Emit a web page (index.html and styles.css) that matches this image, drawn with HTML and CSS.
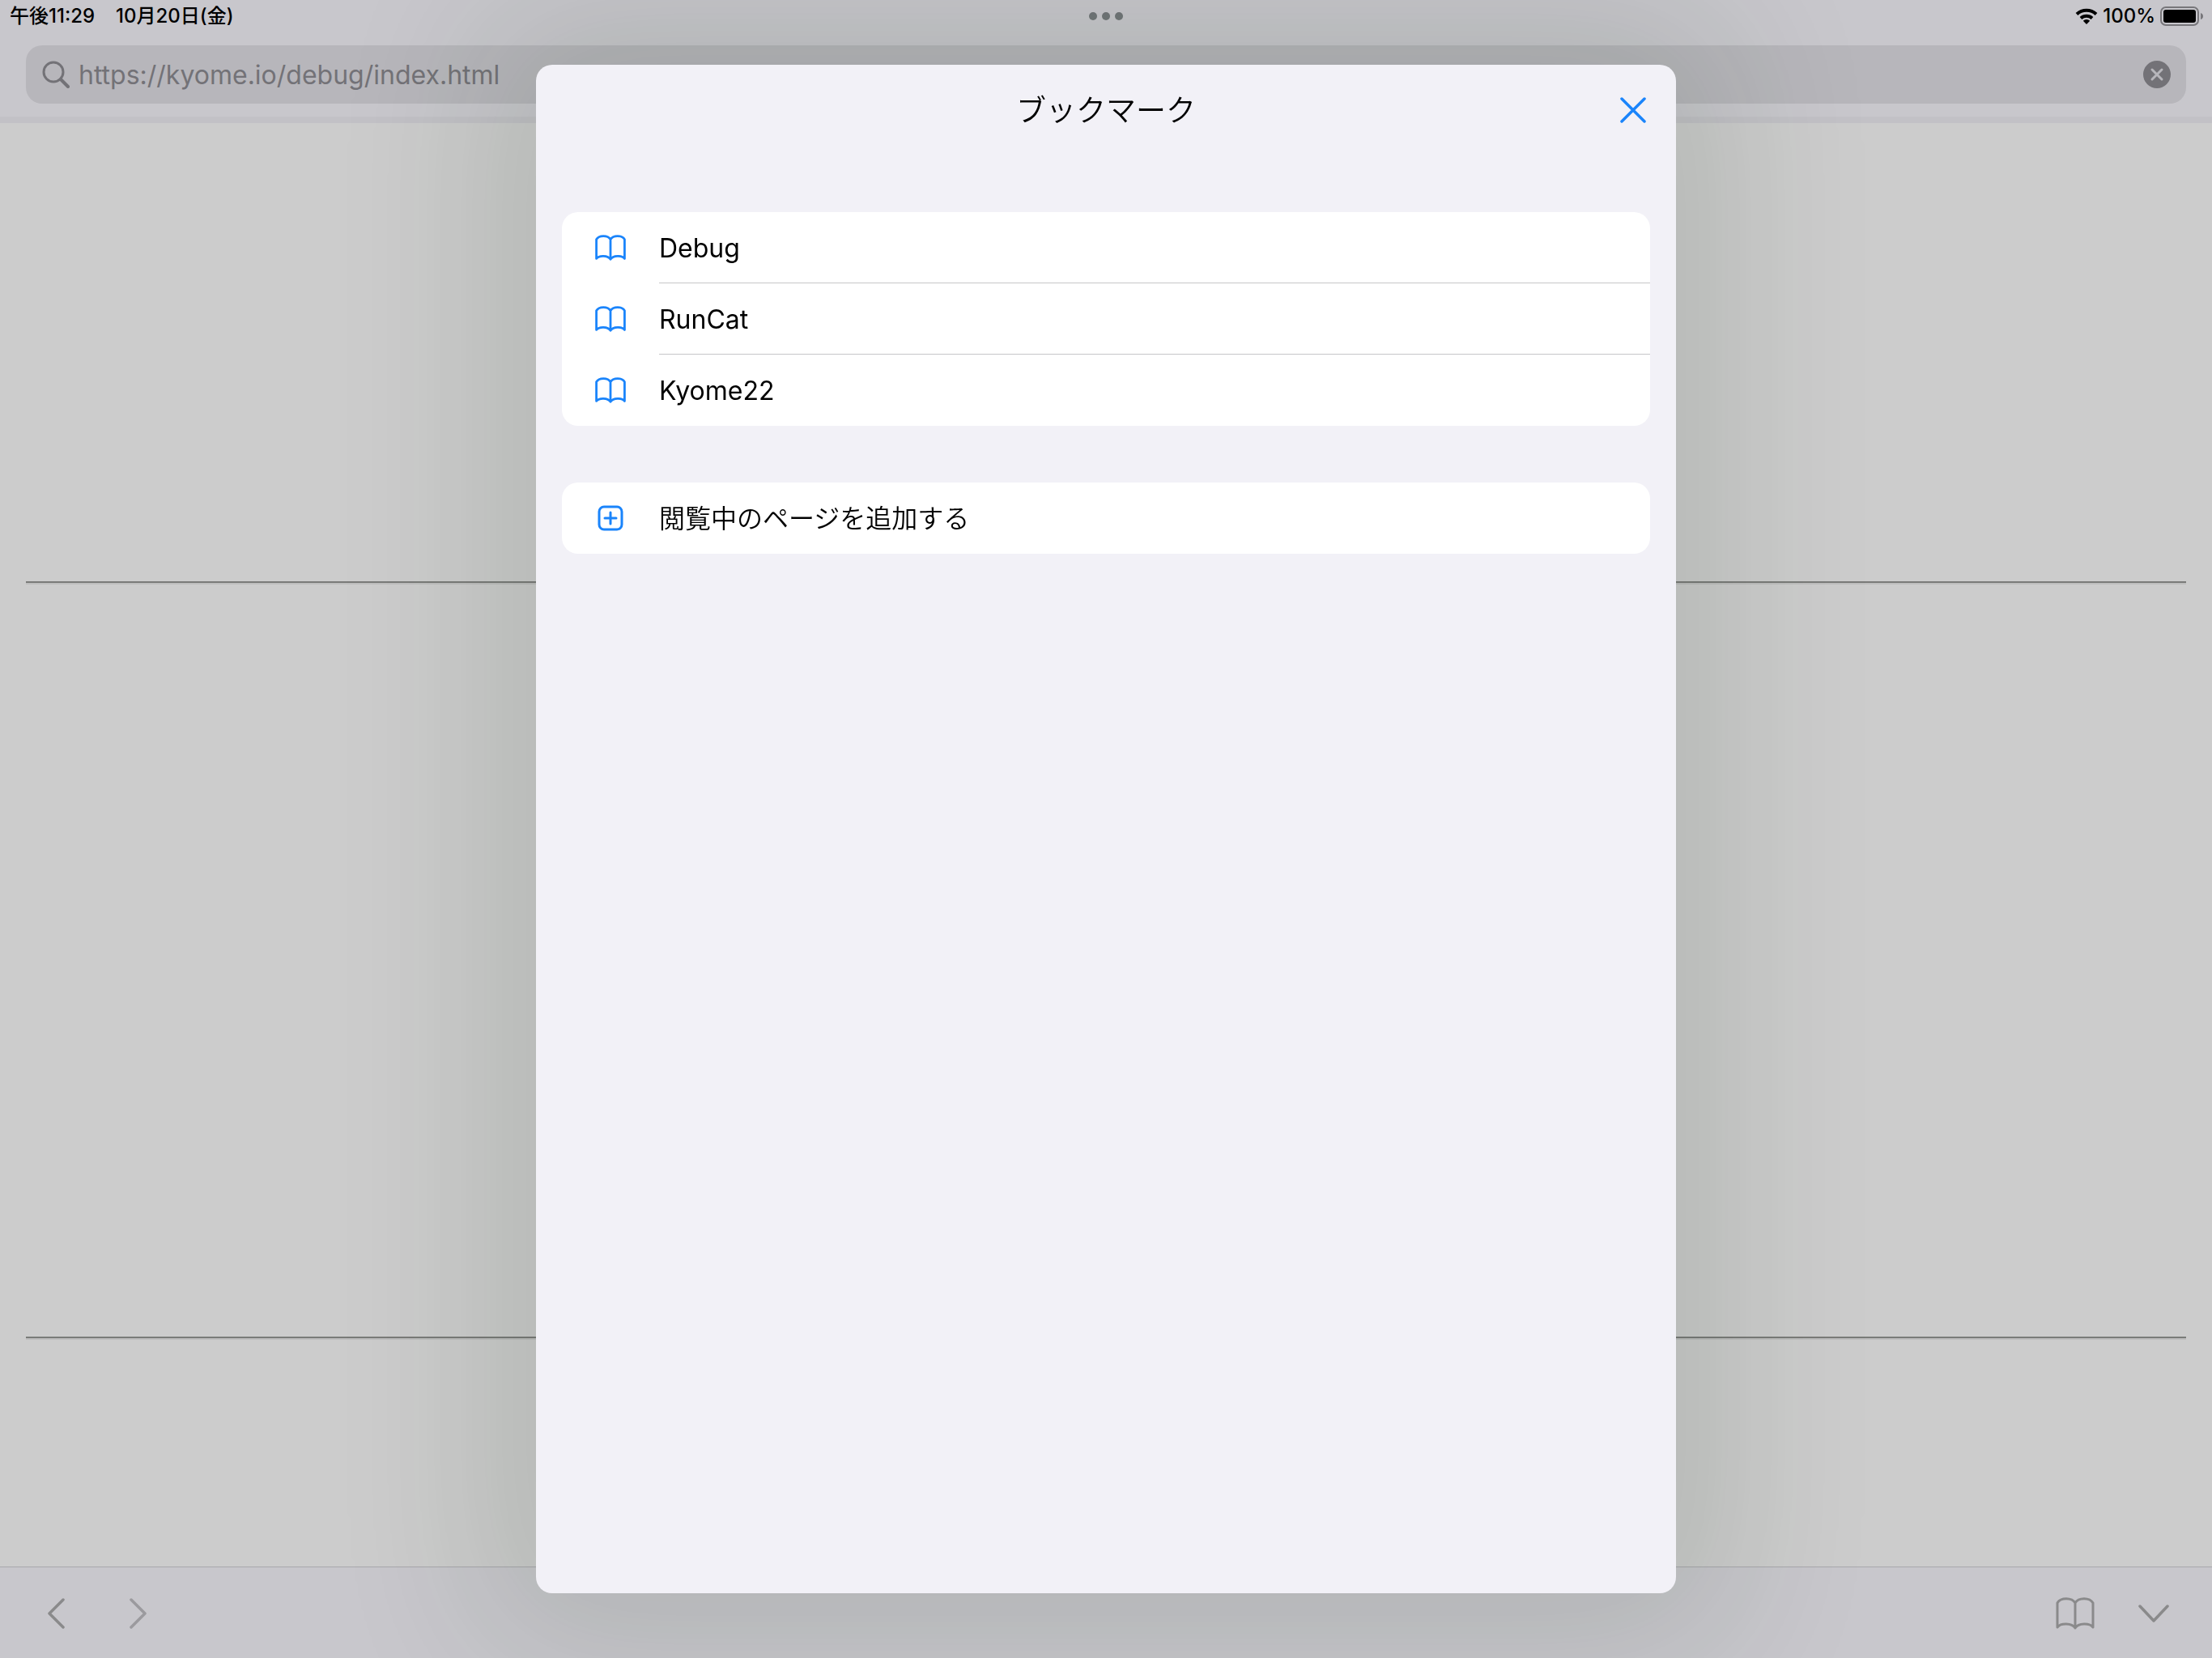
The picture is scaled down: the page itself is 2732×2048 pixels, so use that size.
FILE: index.html
```html
<!DOCTYPE html>
<html lang="ja">
<head>
<meta charset="utf-8">
<meta name="viewport" content="width=device-width, initial-scale=1">
<title>ブックマーク</title>
<link rel="stylesheet" href="styles.css">
</head>
<body>
<svg class="defs" aria-hidden="true">
  <symbol id="book" viewBox="0 0 48 40" fill="none" stroke="currentColor" stroke-linecap="round" stroke-linejoin="round">
    <path d="M24 7C20 0 6 0 2 7V37C6 31.500 20 31.500 24 38C28 31.500 42 31.500 46 37V7C42 0 28 0 24 7V38"/>
  </symbol>
</svg>
<div class="browser">
  <header class="top">
    <div class="status">
      <div class="status-side"><span>午後11:29</span><span>10月20日(金)</span></div>
      <svg class="dots" viewBox="0 0 42 10" aria-hidden="true"><circle cx="5" cy="5" r="5"/><circle cx="21" cy="5" r="5"/><circle cx="37" cy="5" r="5"/></svg>
      <div class="status-side status-right">
        <svg class="wifi" viewBox="0 0 28 20" aria-hidden="true"><path d="M2 7.500A17.500 17.500 0 0 1 26 7.500" fill="none" stroke="#000" stroke-width="4"/><path d="M7 12.500A10.500 10.500 0 0 1 21 12.500" fill="none" stroke="#000" stroke-width="4"/><path d="M14 20L9.800 15.800A6 6 0 0 1 18.200 15.800Z"/></svg>
        <span>100%</span>
        <svg class="battery" viewBox="0 0 54 24" aria-hidden="true"><rect x="1" y="1" width="46" height="22" rx="6" fill="none" stroke="#78777b" stroke-width="2"/><rect x="4" y="4" width="40" height="16" rx="3"/><path d="M50 8Q53 9 53 12T50 16Z" fill="#78777b"/></svg>
      </div>
    </div>
    <form class="address">
      <svg class="search" viewBox="0 0 34 34" aria-hidden="true" fill="none" stroke="currentColor" stroke-width="3" stroke-linecap="round"><circle cx="14" cy="14" r="12"/><path d="M23 23L32 32" stroke-width="4"/></svg>
      <input class="url" type="text" aria-label="URL" value="https://kyome.io/debug/index.html">
      <button class="clear" type="reset" aria-label="消去"><svg viewBox="0 0 34 34"><circle cx="17" cy="17" r="17" fill="#737277"/><path d="M11 11L23 23M23 11L11 23" stroke="#b7b6bb" stroke-width="3" stroke-linecap="round"/></svg></button>
    </form>
  </header>
  <main class="page"><hr><hr></main>
  <nav class="toolbar">
    <button type="button" aria-label="戻る"><svg class="chevron" viewBox="0 0 22 38"><path stroke-width="3.5" d="M20 2L3 19L20 36"/></svg></button>
    <button type="button" aria-label="進む" disabled><svg class="chevron" viewBox="0 0 22 38"><path stroke-width="3.5" d="M2 2L19 19L2 36"/></svg></button>
    <span class="spacer"></span>
    <button type="button" aria-label="ブックマーク"><svg class="book-large"><use href="#book"/></svg></button>
    <button type="button" aria-label="隠す"><svg class="chevron-down" viewBox="0 0 38 22"><path stroke-width="3.5" d="M2 2L19 20L36 2"/></svg></button>
  </nav>
</div>
<div class="overlay">
  <section class="sheet" role="dialog" aria-labelledby="title">
    <header class="sheet-head">
      <h1 id="title">ブックマーク</h1>
      <button class="close" type="button" aria-label="閉じる"><svg viewBox="0 0 32 32"><path stroke-width="3.5" d="M2 2L30 30M30 2L2 30"/></svg></button>
    </header>
    <ul class="card">
      <li><a href="#debug"><svg class="book" stroke-width="3.5"><use href="#book"/></svg><span class="label">Debug</span></a></li>
      <li><a href="#runcat"><svg class="book" stroke-width="3.5"><use href="#book"/></svg><span class="label">RunCat</span></a></li>
      <li><a href="#kyome22"><svg class="book" stroke-width="3.5"><use href="#book"/></svg><span class="label">Kyome22</span></a></li>
    </ul>
    <div class="card">
      <button class="add" type="button"><svg class="plus" viewBox="0 0 32 32" stroke-width="3"><rect x="2" y="2" width="28" height="28" rx="6"/><path d="M16 9V23M9 16H23"/></svg><span class="label label-ja">閲覧中のページを追加する</span></button>
    </div>
  </section>
</div>
</body>
</html>
```
FILE: styles.css
```css
* { box-sizing: border-box; }
body {
  margin: 0;
  font-family: Inter, "Noto Sans CJK JP", sans-serif;
  color: #000;
  background: #ccc;
}
button {
  display: flex;
  padding: 0;
  border: 0;
  background: none;
  color: inherit;
  font: inherit;
}
svg { display: block; flex: none; }
.defs { position: absolute; width: 0; height: 0; }

.browser { display: flex; flex-direction: column; min-height: 100vh; }
.top {
  padding: 0 32px 16px;
  background: #c8c7cc;
  border-bottom: 8px solid #c2c1c6;
}
.status {
  display: grid;
  grid-template-columns: 1fr auto 1fr;
  align-items: center;
  height: 40px;
  margin: 0 -20px 16px;
  font-size: 24px;
  font-weight: 500;
  line-height: 40px;
}
.status-side { display: flex; align-items: center; gap: 26px; }
.status-right { justify-content: flex-end; gap: 6px; margin-right: -2px; }
.dots { width: 42px; height: 10px; fill: #727679; }
.wifi { width: 28px; height: 20px; }
.battery { width: 54px; height: 24px; }
.address {
  display: flex;
  align-items: center;
  height: 72px;
  padding: 0 19px 0 20px;
  border-radius: 20px;
  background: #b7b6bb;
  color: #737277;
}
.search { width: 34px; height: 34px; }
.url {
  flex: 1;
  min-width: 0;
  height: 72px;
  padding: 0 11px;
  border: 0;
  outline: 0;
  background: none;
  color: inherit;
  font: 32px/40px Inter, sans-serif;
}
.clear svg { width: 34px; height: 34px; }

.page { flex: 1; padding: 566px 32px 0; }
.page hr {
  height: 4px;
  margin: 0 0 929px;
  border: 0;
  border-top: 2px solid #7a7b79;
  background: #bebebe;
}
.page hr:last-child { margin: 0; }

.toolbar {
  display: flex;
  align-items: center;
  height: 113px;
  padding: 2px 53px 0 58px;
  border-top: 1px solid #a8a7ac;
  background: #c8c7cc;
  color: #8a8a8b;
}
.toolbar svg { fill: none; stroke: currentColor; stroke-linecap: round; stroke-linejoin: round; }
.toolbar .book-large { stroke-width: 3; }
.toolbar button:nth-of-type(2) { margin-left: 80px; color: #9b9a9e; }
.toolbar button:last-child { margin-left: 54px; }
.spacer { flex: 1; }
.chevron { width: 22px; height: 38px; }
.chevron-down { width: 38px; height: 22px; }
.book-large { width: 48px; height: 40px; }

.overlay {
  position: fixed;
  inset: 0;
  display: flex;
  justify-content: center;
  padding: 80px 32px;
  overflow: hidden;
}
.sheet {
  width: 100%;
  max-width: 1408px;
  padding: 0 32px;
  border-radius: 20px;
  background: #f2f1f7;
  box-shadow: 0 0 190px 60px rgba(20, 45, 25, .13);
}
.sheet-head {
  display: grid;
  grid-template-columns: 1fr auto 1fr;
  align-items: center;
  height: 112px;
  margin-bottom: 70px;
}
h1 {
  grid-column: 2;
  margin: 0 0 4px;
  font-family: "Noto Sans CJK JP", sans-serif;
  font-size: 37px;
  font-weight: 350;
  line-height: 56px;
}
.close { justify-self: end; margin-right: 5px; color: #1a84fb; }
.close svg { width: 32px; height: 32px; fill: none; stroke: currentColor; stroke-linecap: round; }
.card {
  margin: 0 0 70px;
  padding: 0;
  border-radius: 20px;
  background: #fff;
  list-style: none;
}
.card a, .add {
  display: grid;
  grid-template-columns: 120px 1fr;
  align-items: center;
  width: 100%;
  height: 88px;
  color: #1a84fb;
  text-align: left;
  text-decoration: none;
}
.card svg { justify-self: center; fill: none; stroke: currentColor; stroke-linecap: round; }
.book { width: 38px; height: 32px; }
.plus { width: 32px; height: 32px; }
.label {
  height: 88px;
  color: #000;
  font-size: 32px;
  line-height: 90px;
}
.card li:not(:last-child) .label { border-bottom: 1px solid #c6c6c8; }
.label-ja {
  font-family: "Noto Sans CJK JP", sans-serif;
  font-weight: 350;
  line-height: 84px;
}
```
